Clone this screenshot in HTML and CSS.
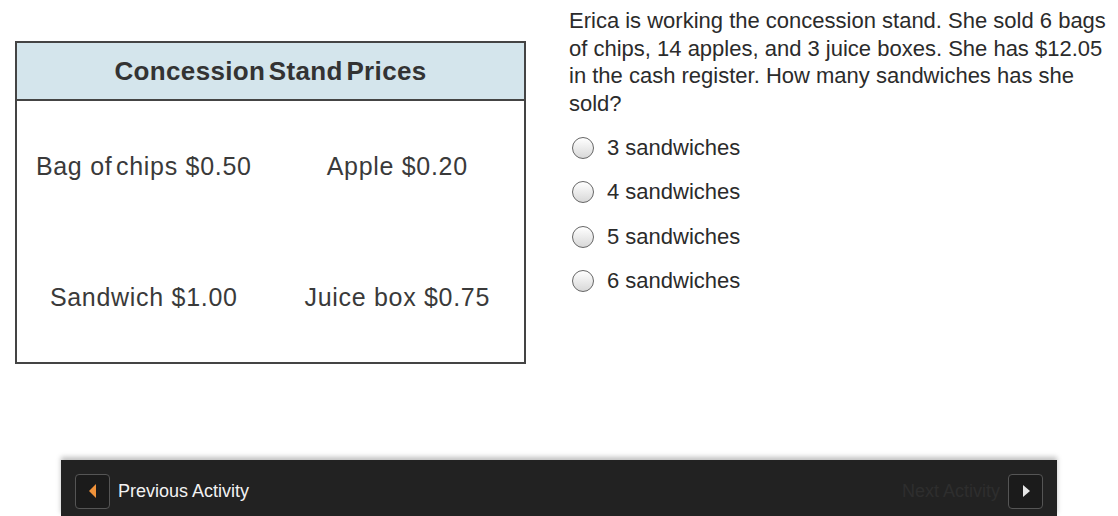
FILE: index.html
```html
<!DOCTYPE html>
<html>
<head>
<meta charset="utf-8">
<link rel="stylesheet" href="styles.css">
</head>
<body>
<div class="page">
  <div class="content">
    <div class="left">
      <div class="table">
        <div class="table-head">Concession Stand Prices</div>
        <div class="table-body">
          <div class="cell">Bag&nbsp;<span class="tight">of chips</span>&nbsp;$0.50</div>
          <div class="cell">Apple $0.20</div>
          <div class="cell">Sandwich $1.00</div>
          <div class="cell">Juice box $0.75</div>
        </div>
      </div>
    </div>
    <div class="right">
      <p class="question">Erica is working the concession stand. She sold 6 bags of chips, 14 apples, and 3 juice boxes. She has $12.05 in the cash register. How many sandwiches has she sold?</p>
      <ul class="options">
        <li class="option"><span class="radio"></span><span>3 sandwiches</span></li>
        <li class="option"><span class="radio"></span><span>4 sandwiches</span></li>
        <li class="option"><span class="radio"></span><span>5 sandwiches</span></li>
        <li class="option"><span class="radio"></span><span>6 sandwiches</span></li>
      </ul>
    </div>
  </div>
  <div class="navbar">
    <div class="nav-item">
      <span class="nav-btn"><svg width="10" height="16" viewBox="0 0 10 16"><polygon points="8,1 8,15 1,8" fill="#f0923a"/></svg></span>
      <span class="nav-label prev">Previous Activity</span>
    </div>
    <div class="nav-item">
      <span class="nav-label next">Next Activity</span>
      <span class="nav-btn"><svg width="10" height="14" viewBox="0 0 10 14"><polygon points="2,1 2,13 9,7" fill="#e6e6e6"/></svg></span>
    </div>
  </div>
</div>
</body>
</html>
```

FILE: styles.css
```css
* { box-sizing: border-box; }
html, body { margin: 0; padding: 0; background: #fff; }
body {
  font-family: "Liberation Sans", Arial, sans-serif;
  width: 1118px;
  height: 516px;
  overflow: hidden;
}
.page {
  display: flex;
  flex-direction: column;
  height: 516px;
}
.content {
  display: flex;
  height: 460px;
}
.left {
  width: 569px;
  padding: 41px 0 0 15px;
}
.table {
  width: 511px;
  height: 323px;
  border: 2px solid #444;
  display: flex;
  flex-direction: column;
}
.table-head {
  height: 58px;
  background: #d4e5ec;
  border-bottom: 2px solid #444;
  display: flex;
  align-items: center;
  justify-content: center;
  font-weight: bold;
  font-size: 26px;
  color: #333;
  letter-spacing: 0.35px;
  word-spacing: -4px;
}
.table-body {
  flex: 1;
  display: grid;
  grid-template-columns: 1fr 1fr;
  grid-template-rows: 1fr 1fr;
}
.cell {
  display: flex;
  align-items: center;
  justify-content: center;
  font-size: 25px;
  color: #3a3a3a;
  letter-spacing: 0.7px;
  padding-top: 1px;
}
.tight { word-spacing: -4px; }
.right {
  flex: 1;
  padding: 7px 0 0 0;
}
.question {
  margin: 0;
  width: 544px;
  font-size: 22px;
  line-height: 27.5px;
  color: #2b2b2b;
}
.options {
  list-style: none;
  margin: 9px 0 0 0;
  padding: 0;
  display: flex;
  flex-direction: column;
}
.option {
  display: flex;
  align-items: center;
  height: 44.3px;
  font-size: 22px;
  color: #2b2b2b;
}
.radio {
  width: 22px;
  height: 22px;
  border-radius: 50%;
  border: 1.5px solid #666;
  background: linear-gradient(#ffffff, #d8d8d8);
  margin: 0 13px 0 3px;
}
.navbar {
  margin: 0 61px;
  height: 56px;
  background: #222;
  box-shadow: 0 -3px 5px rgba(0,0,0,0.25);
  display: flex;
  align-items: center;
  justify-content: space-between;
  padding: 6px 14px 0 14px;
}
.nav-item {
  display: flex;
  align-items: center;
  gap: 8px;
}
.nav-btn {
  width: 35px;
  height: 35px;
  border: 1.5px solid #555;
  border-radius: 4px;
  background: #1b1b1b;
  display: flex;
  align-items: center;
  justify-content: center;
}
.nav-label {
  font-size: 18px;
}
.nav-label.prev { color: #f2f2f2; }
.nav-label.next { color: #2e2e2e; }
```
